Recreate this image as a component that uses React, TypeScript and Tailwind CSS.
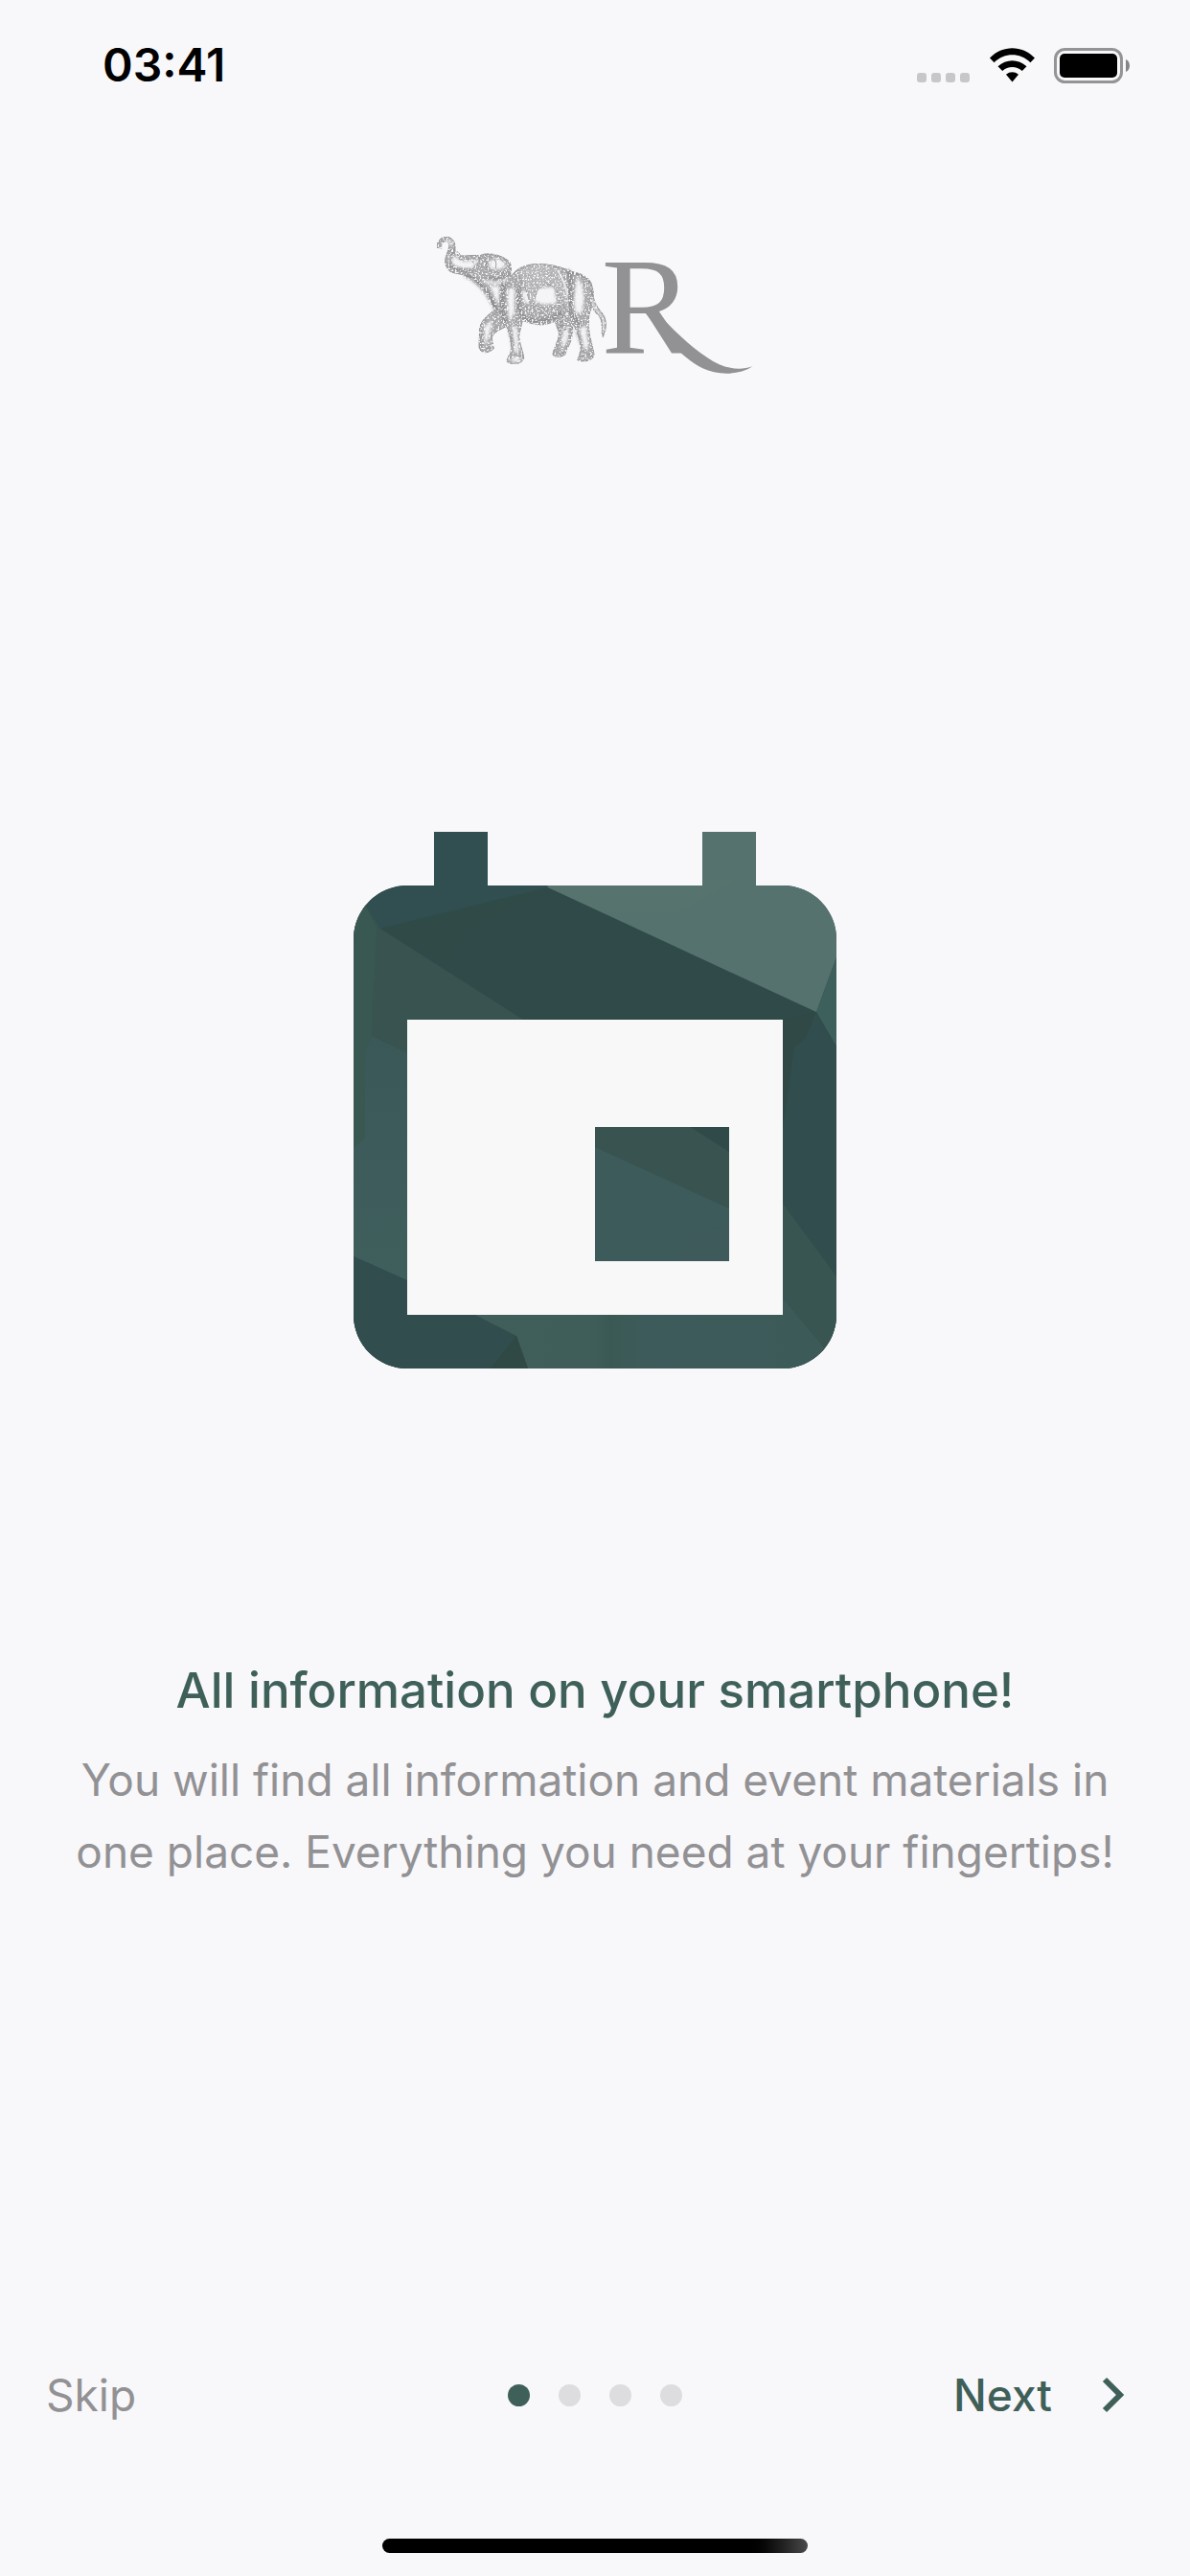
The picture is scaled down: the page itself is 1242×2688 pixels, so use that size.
import { useState } from "react";

interface Slide {
  id: number;
  label: string;
}

const slides: Slide[] = [
  { id: 1, label: "Information" },
  { id: 2, label: "Schedule" },
  { id: 3, label: "Contacts" },
  { id: 4, label: "Notifications" },
];

const StatusBar = () => (
  <header className="flex items-center justify-between pl-[107px] pr-[62px] pt-9">
    <time className="text-5xl leading-16 font-semibold text-black">03:41</time>
    <div className="flex items-center gap-5">
      <svg width="56" height="37" viewBox="0 0 56 37" fill="#c7c6c9" aria-hidden="true">
        <rect x="0" y="26" width="10" height="10" rx="3" />
        <rect x="15" y="26" width="10" height="10" rx="3" />
        <rect x="30" y="26" width="10" height="10" rx="3" />
        <rect x="45" y="26" width="10" height="10" rx="3" />
      </svg>
      <svg width="47" height="37" viewBox="0 0 47 37" aria-hidden="true">
        <path d="M0 10.5C13-3.3 34-3.3 47 10.5L42.400 15.200C31.500 4.700 15.500 4.700 4.600 15.200Z" />
        <path d="M8.500 19.300C17 11.200 30 11.200 38.500 19.300L33.800 24C28 18.700 19 18.700 13.200 24Z" />
        <path d="M17 27.800C20.800 24.500 26.200 24.500 30 27.800L23.500 35.500Z" />
      </svg>
      <svg width="80" height="37" viewBox="0 0 80 37" aria-hidden="true">
        <rect x="1.500" y="1.500" width="69" height="34" rx="10" fill="none" stroke="#949396" strokeWidth="3" />
        <rect x="6" y="6" width="60" height="25" rx="5" />
        <path d="M75 12C80.300 14 80.300 23 75 25Z" fill="#858487" />
      </svg>
    </div>
  </header>
);

const Logo = () => (
  <svg className="w-[334px] overflow-visible" viewBox="42 43 1002 444" role="img" aria-label="Elephant R">
    <defs>
      <pattern id="stipple" width="11" height="9" patternUnits="userSpaceOnUse" patternTransform="rotate(24)">
        <rect width="11" height="9" fill="#a3a2a5" />
        <path d="M0 2h5M6 6h4" stroke="#c4c3c7" strokeWidth="2" />
        <path d="M1 8h3" stroke="#8b8a8d" strokeWidth="2" />
      </pattern>
      <pattern id="blanket" width="10" height="10" patternUnits="userSpaceOnUse">
        <rect width="10" height="10" fill="#bbbabd" />
        <path d="M1 3l3-2 2 4M6 8l3-3" fill="none" stroke="#99989b" strokeWidth="2" />
      </pattern>
      <filter id="soft" x="-20%" y="-20%" width="140%" height="140%">
        <feGaussianBlur stdDeviation="4" />
      </filter>
      {/* speckled engraving grain */}
      <filter id="grain" x="0" y="0" width="100%" height="100%" colorInterpolationFilters="sRGB">
        <feTurbulence type="fractalNoise" baseFrequency="0.18" numOctaves="2" seed="4" />
        <feColorMatrix values="0 0 0 0 0.970  0 0 0 0 0.970  0 0 0 0 0.980  6 0 0 0 -3.100" result="specks" />
        <feComposite in="specks" in2="SourceGraphic" operator="atop" />
      </filter>
    </defs>

    <g filter="url(#grain)">
      {/* far legs */}
      <path d="M232 272C222 295 186 304 182 340L180 398C184 420 212 418 226 402L220 370C222 350 250 342 270 330L282 270Z" fill="url(#stipple)" stroke="#949396" strokeWidth="3" />
      <path d="M412 300L430 352C432 378 412 398 411 422C420 432 442 428 450 420C454 402 468 386 471 362L474 300Z" fill="url(#stipple)" stroke="#949396" strokeWidth="3" />

      {/* trunk and head */}
      <path d="M49 86C46 60 70 48 88 54C110 65 104 88 105 104L120 112L185 110C205 100 250 107 275 130C286 148 276 168 280 176L292 162C318 138 356 132 412 142C446 148 476 166 500 172C525 184 538 205 538 232L530 280C522 300 522 322 524 342C526 370 536 392 540 420C538 442 506 446 488 438L498 408C500 372 484 344 474 326L458 286C440 310 410 324 374 328C350 328 332 318 316 314L306 356C304 386 320 414 320 434C312 452 282 456 266 442L276 418C290 392 270 350 266 330L254 292L230 282C214 240 194 204 164 186L134 172L96 164C74 154 70 130 78 108C90 82 88 66 76 66C62 68 62 78 62 86Z" fill="url(#stipple)" stroke="#949396" strokeWidth="3" strokeLinejoin="round" />

      {/* light areas of the body */}
      <g fill="#f4f3f6" filter="url(#soft)">
        <path d="M84 108L108 116L130 130L180 124L160 152L112 148L86 130Z" />
        <path d="M82 60L94 68L92 88L86 76Z" />
        <ellipse cx="236" cy="138" rx="25" ry="16" />
        <path d="M196 184C220 196 248 194 270 180L262 194C238 204 212 202 194 194Z" />
        <path d="M216 206L246 208L244 264C230 250 222 226 216 206Z" />
        <path d="M272 214L292 214L290 292L274 320C270 284 268 244 272 214Z" />
        <path d="M360 214L416 208L422 262L380 264L350 252Z" />
        <path d="M312 216L334 230L342 264L322 256Z" />
        <path d="M486 178C508 198 514 250 500 290C480 300 476 270 478 240Z" />
        <path d="M284 334L298 334L304 410L292 416Z" />
        <path d="M494 334L514 330L522 400L508 404Z" />
        <path d="M196 334L222 312L208 370L198 396Z" />
        <path d="M446 340L462 332L456 380L438 400Z" />
        <path d="M276 438L300 424L312 434L296 446Z" />
      </g>

      {/* dark shading */}
      <g fill="none" stroke="#8b8a8d" strokeLinecap="round" filter="url(#soft)">
        <path d="M94 88C98 116 84 130 90 144C104 156 130 160 154 160" strokeWidth="9" />
        <path d="M140 174C180 190 210 230 234 282" strokeWidth="12" />
        <path d="M256 200C248 246 252 284 262 316" strokeWidth="14" />
        <path d="M306 212C302 250 306 284 312 300C350 326 400 320 438 290" strokeWidth="12" />
        <path d="M460 160C472 190 466 248 462 284L496 330" strokeWidth="12" />
        <path d="M190 340L188 396M276 346L286 400M484 342L500 390M468 330L464 370" strokeWidth="5" />
        <path d="M200 180C222 186 250 182 272 168" strokeWidth="7" />
      </g>

      {/* ear, eye and mouth */}
      <g fill="none" stroke="#98979a" strokeWidth="3" strokeLinecap="round">
        <path d="M190 112C218 102 246 112 252 128C262 118 280 132 278 152C274 168 236 166 218 160M216 114C232 120 236 134 232 150" />
        <path d="M105 104C116 90 124 112 120 118M118 122C146 126 170 118 192 118M132 164C152 160 170 150 176 136" />
        <path d="M160 130L172 156M180 118L190 160M200 114L206 158" />
        <path d="M49 86L63 88M183 402L222 400M412 418L448 416M268 438L292 422L318 430M490 432L514 416L538 428" />
        <path d="M424 306L440 304M424 318L446 316M428 332L450 328M430 344L452 342" strokeWidth="5" />
      </g>

      {/* blanket */}
      <path d="M300 162C334 134 376 134 412 144C440 164 456 196 458 232L462 288C448 284 446 260 432 238C420 216 408 198 388 200C362 210 354 240 348 276C336 262 334 226 316 196Z" fill="url(#blanket)" stroke="#a09fa2" strokeWidth="3" />
      <path d="M412 144C440 164 456 196 458 232L462 288C454 250 452 196 412 144Z" fill="#e6e5e8" stroke="#a09fa2" strokeWidth="2" />
      <path d="M470 164C500 168 526 182 534 208" fill="none" stroke="#8d8c8f" strokeWidth="7" strokeDasharray="9 3" />

      {/* tail */}
      <path d="M532 216C536 248 544 270 562 288C578 306 582 336 568 364C560 350 570 324 560 306C548 290 536 280 530 264Z" fill="#c9c8cb" stroke="#99989b" strokeWidth="4" />
    </g>

    {/* letter and its swash */}
    <text x="563" y="416" fill="#929193" fontFamily="'Liberation Serif', 'Times New Roman', serif" fontSize="432">
      R
    </text>
    <path d="M700 290L734 284C782 340 840 394 894 430C938 462 990 474 1037 458C990 488 925 485 880 464C812 430 760 362 714 308Z" fill="#929193" />
  </svg>
);

const CalendarArt = () => (
  <svg className="w-[504px]" viewBox="0 0 504 560" aria-hidden="true">
    <defs>
      <clipPath id="calendar">
        <path
          clipRule="evenodd"
          d="M84 0H140V56H364V0H420V56H448A56 56 0 0 1 504 112V504A56 56 0 0 1 448 560H56A56 56 0 0 1 0 504V112A56 56 0 0 1 56 56H84ZM56 196V504H448V196ZM252 308H392V448H252Z"
        />
      </clipPath>
      <linearGradient id="leftFacet" x1="0" y1="0" x2="0" y2="1">
        <stop offset="0" stopColor="#3a5858" />
        <stop offset="1" stopColor="#3f5f5d" />
      </linearGradient>
      <linearGradient id="floorFacet" x1="0" y1="0" x2="1" y2="0">
        <stop offset="0" stopColor="#405f5b" />
        <stop offset="0.340" stopColor="#3f5e5a" />
        <stop offset="0.400" stopColor="#3b5954" />
        <stop offset="0.500" stopColor="#3d5b5a" />
        <stop offset="1" stopColor="#3b5a58" />
      </linearGradient>
    </defs>
    <rect x="56" y="196" width="392" height="308" fill="#f8f8f8" />
    <g clipPath="url(#calendar)">
      <rect width="504" height="560" fill="#304a49" />
      <path d="M0 0H203V58L28 101L12 80H0Z" fill="#314f50" />
      <path d="M28 101L203 58L120 100L100 135Z" fill="#304b47" />
      <path d="M200 0H504V131L483 188L203 58Z" fill="#56726f" />
      <path d="M203 58L200 50H400L340 84H260Z" fill="#57736d" />
      <path d="M504 131L483 188L504 224Z" fill="#3e605c" />
      <path d="M483 188L448 196V388L504 464V224Z" fill="#314d4e" />
      <path d="M448 196L483 188L472 215L460 225L448 310Z" fill="#304946" />
      <path d="M28 101L177 196L392 334L448 388L504 464V560H0V70L12 76Z" fill="#385350" />
      <path d="M0 70L12 76L24 101L19 213L12 227V430H0Z" fill="#3a5852" />
      <path d="M19 213L56 231V468L0 443V330L12 320V227Z" fill="url(#leftFacet)" />
      <path d="M252 329L392 393V448H252Z" fill="#3d5b5a" />
      <path d="M350 420L392 410V448H340Z" fill="#3e5a5b" />
      <path d="M110 500H448V487L487 533L504 560H110Z" fill="url(#floorFacet)" />
      <path d="M448 388L504 464V534L487 533L448 487Z" fill="#385551" />
      <path d="M0 443L56 468L127 504L170 526L182 560H0Z" fill="#314d4d" />
      <path d="M170 526L182 560H143Z" fill="#304944" />
    </g>
  </svg>
);

const App = () => {
  const [active, setActive] = useState(0);

  const goNext = () => {
    setActive((prev) => Math.min(prev + 1, slides.length - 1));
  };

  return (
    <div className="flex min-h-screen flex-col bg-[#f8f7fa] font-['Inter','Liberation_Sans',sans-serif]">
      <StatusBar />

      <main className="flex flex-1 flex-col items-center px-16 pt-36 text-center">
        <Logo />
        <div className="mt-[476px]">
          <CalendarArt />
        </div>
        <h1 className="mt-[300px] text-[51px] leading-[72px] font-medium text-[#3f6058]">
          All information on your smartphone!
        </h1>
        <p className="mt-5 text-[46px] leading-[75px] text-[#929194]">
          You will find all information and event materials in one place. Everything you need at your fingertips!
        </p>
      </main>

      <nav className="grid grid-cols-3 items-center px-12 text-[46px] leading-16" aria-label="Onboarding">
        <button className="justify-self-start text-[#929194]" onClick={() => setActive(slides.length - 1)}>
          Skip
        </button>
        <div className="flex gap-[30px] justify-self-center">
          {slides.map((slide, index) => (
            <button
              key={slide.id}
              onClick={() => setActive(index)}
              className={`size-[23px] rounded-full ${index === active ? "bg-[#3f6058]" : "bg-[#dddcdf]"}`}
              aria-label={slide.label}
            />
          ))}
        </div>
        <button className="flex items-center gap-[52px] justify-self-end pr-5 font-medium text-[#3f6058]" onClick={goNext}>
          Next
          <svg width="24" height="38" viewBox="0 0 24 38" fill="none" stroke="currentColor" strokeWidth="6" aria-hidden="true">
            <path d="M3 3L19 19L3 35" />
          </svg>
        </button>
      </nav>

      <footer className="flex justify-center pt-[118px] pb-6">
        <div className="h-[15px] w-[444px] rounded-full bg-linear-to-r from-black from-85% to-[#4a4a4c]" />
      </footer>
    </div>
  );
};

export default App;
